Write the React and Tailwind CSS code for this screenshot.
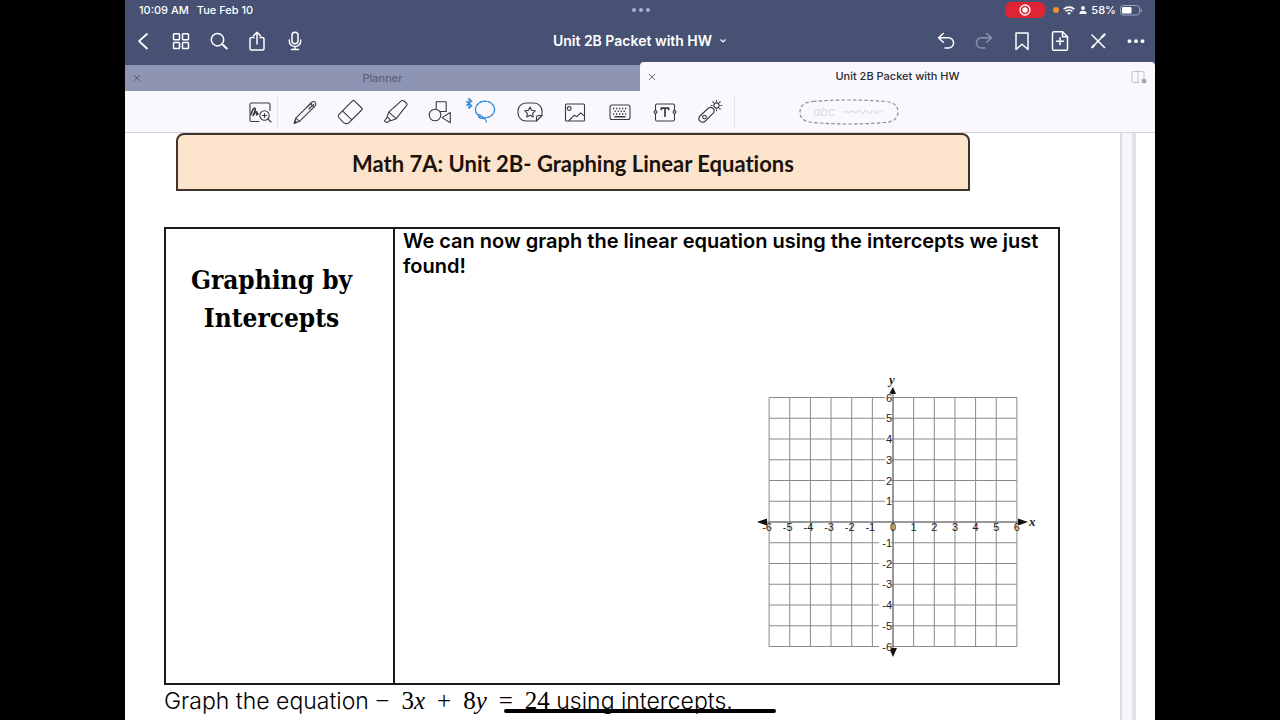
import React, { useState } from "react";

/* ----------------------------- Icon components ----------------------------- */
const NavIcon = ({ children, ...props }) => (
  <svg viewBox="0 0 24 24" fill="none" stroke="currentColor" strokeWidth="1.5" strokeLinecap="round" strokeLinejoin="round" className="h-6 w-6" {...props}>
    {children}
  </svg>
);

// tool icons are drawn around their own centre
const ToolIcon = ({ children, ...props }) => (
  <svg viewBox="-14 -14 28 28" fill="none" stroke="currentColor" strokeWidth="1.1" strokeLinecap="round" strokeLinejoin="round" className="h-7 w-7" {...props}>
    {children}
  </svg>
);

const IconClose = () => (
  <svg viewBox="0 0 8 8" fill="none" stroke="currentColor" strokeWidth="1" className="h-2 w-2">
    <path d="M1 1l6 6M7 1l-6 6" />
  </svg>
);

const leftActions = [
  { label: "Back", icon: <path d="M16 5l-8 7.2 8 7.3" strokeWidth="1.8" /> },
  {
    label: "Thumbnails",
    icon: (
      <>
        <rect x="4.5" y="4.7" width="6" height="6" rx=".8" />
        <rect x="13.5" y="4.7" width="6" height="6" rx=".8" />
        <rect x="4.5" y="13.5" width="6" height="6" rx=".8" />
        <rect x="13.5" y="13.5" width="6" height="6" rx=".8" />
      </>
    ),
  },
  {
    label: "Search",
    icon: (
      <>
        <circle cx="10.5" cy="10.7" r="6.2" />
        <path d="M15.2 15.2l4.6 4.3" strokeWidth="1.9" />
      </>
    ),
  },
  {
    label: "Share",
    icon: (
      <>
        <path d="M9 8.5H6.5A1.5 1.5 0 0 0 5 10v9.5A1.5 1.5 0 0 0 6.5 21h11a1.5 1.5 0 0 0 1.5-1.5V10a1.5 1.5 0 0 0-1.5-1.5H15" />
        <path d="M12 15V3.5M8.5 6.7L12 3.3l3.5 3.4" />
      </>
    ),
  },
  {
    label: "Record",
    icon: (
      <>
        <rect x="9" y="3.2" width="6" height="11.5" rx="3" />
        <path d="M6.3 11v1.2a5.7 5.3 0 0 0 11.4 0V11M12 17.5v2.7M8.5 20.4h7" />
      </>
    ),
  },
];

const rightActions = [
  { label: "Undo", icon: <path d="M9.3 4.5L4.5 8.8l4.8 4.4M4.8 8.8h9.7a5 5 0 0 1 0 10.2H11" /> },
  {
    label: "Redo",
    disabled: true,
    icon: <path d="M14.7 4.5l4.8 4.3-4.8 4.4M19.2 8.8H9.5a5 5 0 0 0 0 10.2H13" />,
  },
  { label: "Bookmark", icon: <path d="M6 4h12v16.5l-6-5.3-6 5.3z" /> },
  {
    label: "Add page",
    icon: (
      <>
        <path d="M14.5 2.7H6A1.5 1.5 0 0 0 4.5 4.2v15.5A1.5 1.5 0 0 0 6 21.2h12a1.5 1.5 0 0 0 1.5-1.5V7.7z" />
        <path d="M14.5 2.7v5h5M12 8.7v7M8.5 12.2h7" />
      </>
    ),
  },
  {
    label: "Close tools",
    icon: (
      <>
        <path d="M6 6l12.5 12.5" />
        <path d="M6 18.5L16 8" />
        <path d="M16 8l2.5-2.5M6.5 18l1.5-1.5" strokeWidth="2.3" />
      </>
    ),
  },
  {
    label: "More",
    icon: (
      <g fill="currentColor" stroke="none">
        <circle cx="5.5" cy="12.2" r="1.9" />
        <circle cx="12" cy="12.2" r="1.9" />
        <circle cx="18.5" cy="12.2" r="1.9" />
      </g>
    ),
  },
];

const tools = [
  {
    label: "Pen",
    icon: (
      <>
        <path d="M-10.8 11.2l1.6-5L5.5-8.3l3.4 3.5L-5.5 9.4z" />
        <path d="M5.5-8.3l1.8-1.8q1.5-1 2.8.3t.5 3l-1.7 2" />
        <path d="M-9.2 6.2l3.7 3.2M2.3-5.2l4.2-4.3M8.6-7.6L4-3" />
        <path d="M-10.8 11.2l.8-2.4 1.6 1.6z" fill="currentColor" />
      </>
    ),
  },
  {
    label: "Eraser",
    icon: (
      <>
        <path d="M2.5-11.2q1-1 2 0l7.2 7.2q1 1 0 2L-.8 10.3q-1.8 1.8-3.8 1.2-1.4-.4-2.6-1.6L-11.2 5.5q-1.3-1.5 0-2.9z" />
        <path d="M-7.5-1.2L1.8 7.8" />
      </>
    ),
  },
  {
    label: "Highlighter",
    icon: (
      <>
        <path d="M-6.3.2L6.3-11.2q1.2-1 2.3 0l3 2.4q1 1 .1 2.2L1.2 6.7z" />
        <path d="M-6.3.2l-1.5 4.5 3.6 4 5.4-2M-7.6 5.2l-3 3.8 2.7 1.6 3.2-2.3" />
      </>
    ),
  },
  {
    label: "Shapes",
    icon: (
      <>
        <path d="M-3.8-3.5v-6.7h10v9.7H.2" />
        <circle cx="-5" cy="3" r="5.8" />
        <path d="M10.3.5v10.2L2 5.6z" />
      </>
    ),
  },
  {
    label: "Lasso",
    active: true,
    icon: (
      <>
        <ellipse cx="0" cy="-2.5" rx="9.5" ry="8.3" strokeDasharray="3 1.5" strokeWidth="1.4" />
        <path d="M-7 3q1.5-1.2 3.5.8t.5 2.7q-1.6.4-3.6-1.7M-2.5 6.2q3.5.5 4 4" strokeDasharray="3 1" />
      </>
    ),
  },
  {
    label: "Stickers",
    icon: (
      <>
        <path d="M6.5 9H-4a8 8 0 0 1-8-8v-2a8 8 0 0 1 8-8h8a8 8 0 0 1 8 8v4.5z" />
        <path d="M6.5 9V5.5q0-2 2-2H12" />
        <path d="M0-5l1.6 3.3 3.6.5-2.6 2.5.6 3.6L0 3.2l-3.2 1.7.6-3.6-2.6-2.5 3.6-.5z" />
      </>
    ),
  },
  {
    label: "Image",
    icon: (
      <>
        <rect x="-9.5" y="-8" width="19" height="17" rx="1" />
        <circle cx="-5.8" cy="-3.5" r="1.9" />
        <path d="M-6 8.5l5.5-5.3 2.2 1.5 4-3.8 3.8 3.3" />
      </>
    ),
  },
  {
    label: "Keyboard",
    icon: (
      <>
        <rect x="-10" y="-7" width="20" height="14.5" rx="2" />
        <path d="M-7-3.5h14M-5.5-.7h12M-7 2h14" strokeWidth="1.6" strokeDasharray="1.3 1.7" strokeLinecap="butt" />
        <path d="M-5 4.7H5" strokeWidth="1.6" />
      </>
    ),
  },
  {
    label: "Text box",
    icon: (
      <>
        <path d="M-9.5-2v-4.5Q-9.5-8-8-8H8q1.5 0 1.5 1.5V-2M-9.5 2v5.5Q-9.5 9-8 9H8q1.5 0 1.5-1.5V2" />
        <circle cx="-9.5" cy="0" r="1.4" />
        <circle cx="9.5" cy="0" r="1.4" />
        <path d="M-3.7-2.5v-1.3h7.4v1.3M0-3.8v8" strokeWidth="1.7" />
      </>
    ),
  },
  {
    label: "Laser pointer",
    icon: (
      <>
        <path d="M-10.5 4.5L-1.5-4q2.5-1.5 4.5.3t.5 4.5l-8.7 8.7q-2.6 1.7-4.8-.3t-.5-4.7z" />
        <circle cx="-5.5" cy="5" r="1.8" />
        <circle cx="6.5" cy="-6.5" r="2.6" />
        <path d="M6.5-11.8v1M6.5-2.2v1M1.2-6.5h1M10.8-6.5h1M2.8-10.2l.7.7M9.5-3.5l.7.7M10.2-10.2l-.7.7" />
      </>
    ),
  },
];

/* ------------------------------- Status bar ------------------------------- */
function StatusBar() {
  return (
    <div className="grid h-5 grid-cols-[1fr_auto_1fr] items-center pl-3.5 pr-3 text-[11px] font-medium">
      <div className="flex gap-2">
        <span>10:09 AM</span>
        <span>Tue Feb 10</span>
      </div>
      <div className="flex gap-[3px]">
        <span className="h-1 w-1 rounded-full bg-[#a9b1d4]" />
        <span className="h-1 w-1 rounded-full bg-[#a9b1d4]" />
        <span className="h-1 w-1 rounded-full bg-[#a9b1d4]" />
      </div>
      <div className="flex items-center justify-end gap-1">
        <span className="mr-1 flex h-4 w-10 items-center justify-center rounded-md bg-[#df2533]">
          <svg viewBox="0 0 12 12" className="h-3 w-3" fill="none" stroke="white" strokeWidth="1.3">
            <circle cx="6" cy="6" r="5" />
            <circle cx="6" cy="6" r="2" fill="white" />
          </svg>
        </span>
        <span className="h-1.5 w-1.5 rounded-full bg-[#f0922b]" />
        <svg viewBox="0 0 12 9" className="h-[9px] w-3" fill="none" stroke="white" strokeWidth="1.6">
          <path d="M.6 3.3a7.7 7.7 0 0 1 10.8 0M2.6 5.4a4.8 4.8 0 0 1 6.8 0" />
          <path d="M6 9L4.2 7.1a2.5 2.5 0 0 1 3.6 0z" fill="white" stroke="none" />
        </svg>
        <svg viewBox="0 0 8 8" className="h-2 w-2" fill="white">
          <circle cx="4" cy="2" r="1.9" />
          <path d="M.4 8q0-3.3 3.6-3.3T7.6 8z" />
        </svg>
        <span>58%</span>
        <svg viewBox="0 0 23 11" className="h-[11px] w-[23px]" fill="none">
          <rect x=".5" y=".5" width="19" height="9.5" rx="2.8" stroke="#9ca3bd" />
          <rect x="2" y="2" width="9.5" height="6.5" rx="1.3" fill="white" />
          <path d="M21.2 3.7v3.2" stroke="#9ca3bd" strokeWidth="1.2" />
        </svg>
      </div>
    </div>
  );
}

function ActionButton({ label, icon, disabled }) {
  return (
    <button type="button" aria-label={label} disabled={disabled} className="h-6 w-6 disabled:text-[#8b93b3]">
      <NavIcon>{icon}</NavIcon>
    </button>
  );
}

function NavBar() {
  return (
    <nav className="grid h-[42px] grid-cols-[1fr_auto_1fr] items-center pl-1.5 pr-[7px]">
      <div className="flex gap-3.5">
        {leftActions.map((a) => (
          <ActionButton key={a.label} {...a} />
        ))}
      </div>
      <button type="button" className="flex items-center gap-2 text-sm font-semibold">
        Unit 2B Packet with HW
        <svg viewBox="0 0 6 4" className="h-1 w-1.5" fill="none" stroke="currentColor" strokeWidth="1.2">
          <path d="M.5.5L3 3 5.5.5" />
        </svg>
      </button>
      <div className="flex justify-end gap-3.5">
        {rightActions.map((a) => (
          <ActionButton key={a.label} {...a} />
        ))}
      </div>
    </nav>
  );
}

/* ---------------------------------- Tabs ---------------------------------- */
function Tabs() {
  return (
    <div className="flex h-[29px] items-end text-[11px]">
      <div className="flex h-[26px] flex-1 items-center bg-[#8e95b3] px-2 text-[#5a607c]">
        <button type="button" aria-label="Close Planner" className="flex w-5">
          <IconClose />
        </button>
        <button type="button" className="flex-1 text-center font-medium">
          Planner
        </button>
        <span className="w-5" />
      </div>
      <div className="flex h-full flex-1 items-center rounded-t bg-[#faf8fd] px-2 text-[#2b2b2f]">
        <button type="button" aria-label="Close Unit 2B Packet with HW" className="flex w-5 text-[#6f6f76]">
          <IconClose />
        </button>
        <button type="button" className="flex-1 text-center font-medium">
          Unit 2B Packet with HW
        </button>
        <button type="button" aria-label="Split view" className="flex w-5 justify-end text-[#c3c1c8]">
          <svg viewBox="0 0 16 14" className="h-3.5 w-4" fill="none" stroke="currentColor">
            <path d="M8.5 12.5h-6A1.5 1.5 0 0 1 1 11V3a1.5 1.5 0 0 1 1.5-1.5h9A1.5 1.5 0 0 1 13 3v5M7 1.5v11" />
            <circle cx="13" cy="11" r="2.5" fill="#a9a8ae" stroke="none" />
          </svg>
        </button>
      </div>
    </div>
  );
}

/* --------------------------------- Toolbar -------------------------------- */
function Toolbar() {
  const [tool, setTool] = useState("Lasso");

  return (
    <div className="flex h-[42px] items-center border-b border-[#d5d3da] bg-[#faf8fd] pl-[118px] text-[#3a3a3e]">
      <button type="button" aria-label="Zoom window" className="flex w-[34px] justify-center">
        <ToolIcon>
          <path d="M10-1.5v-6Q10-9 8.5-9h-17Q-10-9-10-7.5v15.5q0 1.5 1.5 1.5H-1" />
          <path d="M-9 2.5q2.2-7 3.8-6.3T-7 3.5q1.6-3 3-3.5t.7 1.8 1.3 0" strokeWidth="1.6" />
          <circle cx="4.5" cy="3.5" r="4.7" />
          <path d="M8 7l3 3M4.5 1.5v4M2.5 3.5h4" />
        </ToolIcon>
      </button>
      <span className="h-8 w-px bg-[#e4e2e8]" />
      <div className="ml-1 flex">
        {tools.map((t) => (
          <button
            key={t.label}
            type="button"
            aria-label={t.label}
            aria-pressed={tool === t.label}
            onClick={() => setTool(t.label)}
            className="relative flex w-[45px] justify-center aria-pressed:text-[#2f86d6]"
          >
            <ToolIcon>{t.icon}</ToolIcon>
            {t.active && (
              <svg viewBox="0 0 8 12" className="absolute left-[3px] top-0 h-[11px] w-2" fill="none" stroke="#2f86d6" strokeWidth="1.4">
                <path d="M1 3.5l6 5-3 2.7V.8l3 2.7-6 5" />
              </svg>
            )}
          </button>
        ))}
      </div>
      <span className="ml-0.5 h-8 w-px bg-[#e4e2e8]" />
      <button type="button" aria-label="Lasso selection" className="relative ml-16 flex h-[26px] w-[100px] items-center justify-center gap-2 text-[#dddce0]">
        <svg viewBox="0 0 100 26" className="absolute inset-0 h-full w-full" fill="none" stroke="#8d8c92" strokeWidth="1.2">
          <path d="M14 2.5Q50-.5 86 2.5 99 3.5 99 13T86 23.5Q50 26.5 14 23.5 1 22.5 1 13T14 2.5z" strokeDasharray="3.5 2.2" />
        </svg>
        <span className="text-xs italic">abc</span>
        <svg viewBox="0 0 42 4" className="h-1 w-[42px]" fill="none" stroke="currentColor" strokeWidth="1.2">
          <path d="M0 2.5q2-1.5 4-.5t3.5-.5 3.5.5 3.5-.5 3.5.5 3.5-.5 3.5.5 3.5-.5 3.5.5 3.5-.5 3.500.5" />
        </svg>
      </button>
    </div>
  );
}

/* ----------------------------- Coordinate plane ---------------------------- */
const TICKS = [-6, -5, -4, -3, -2, -1, 0, 1, 2, 3, 4, 5, 6];
const px = (n) => 143 + n * 20.65;
const py = (n) => 153 - n * 20.75;

function CoordinatePlane() {
  return (
    <svg viewBox="0 0 300 300" className="h-[300px] w-[300px] font-['Liberation_Sans',sans-serif] font-normal" role="img" aria-label="Coordinate plane">
      <g stroke="#8a8a8a" strokeWidth="1">
        {TICKS.map((n) => (
          <React.Fragment key={n}>
            <path d={`M${px(n)} ${py(6)}V${py(-6)}`} />
            <path d={`M${px(-6)} ${py(n)}H${px(6)}`} />
          </React.Fragment>
        ))}
      </g>
      <path d="M8 153H276M143 20V284" stroke="#6a6a6a" strokeWidth="1" />
      <g fill="#111">
        <path d="M7 153l10-3.5v7zM278 153l-10-3.5v7zM143 18l-4 7h7zM143 288l-4-9h8z" />
      </g>
      <g fill="#222" fontSize="11">
        {TICKS.filter((n) => n !== 0).map((n) => (
          <React.Fragment key={n}>
            <rect x={n < 0 ? 129 : 135} y={py(n) - 4} width={n < 0 ? 12 : 6} height="8" fill="white" />
            <text x="142" y={py(n) + 4} textAnchor="end">{n}</text>
          </React.Fragment>
        ))}
        {TICKS.map((n) => (
          <text key={n} x={n < 0 ? px(n) - 2 : px(n)} y="162" textAnchor="middle">{n}</text>
        ))}
      </g>
      <g fill="#222" fontSize="13" fontStyle="italic" fontWeight="bold" className="font-['Liberation_Serif',serif]">
        <text x="139" y="15">y</text>
        <text x="279" y="157">x</text>
      </g>
    </svg>
  );
}

/* -------------------------------- Worksheet ------------------------------- */
function Worksheet() {
  return (
    <main className="flex min-h-0 flex-1 overflow-hidden bg-white text-black">
      <article className="flex-1 pl-[39px] pr-[60px]">
        <h1 className="ml-3 mr-[90px] flex h-[58px] items-center justify-center rounded-t-lg border-2 border-[#40332c] bg-[#fce3cc] pt-0.5 font-[Lato,sans-serif] text-[22px] font-bold text-[#1c120d] [font-variant-ligatures:none]">
          Math 7A: Unit 2B- Graphing Linear Equations
        </h1>
        <table className="mt-9 w-full border-collapse">
          <tbody>
            <tr className="align-top">
              <th scope="row" className="w-[229px] border-2 border-[#1a1a1a] pr-4 pt-8 font-['DejaVu_Serif_Condensed','DejaVu_Serif',serif] text-[26px] font-bold leading-[38px]">
                Graphing by
                <br />
                Intercepts
              </th>
              <td className="border-2 border-[#1a1a1a] pb-3.5 pl-2 pr-2 font-[Inter,sans-serif] text-xl font-semibold leading-[25px]">
                <p>We can now graph the linear equation using the intercepts we just found!</p>
                <div className="mt-[90px] flex justify-end">
                  <CoordinatePlane />
                </div>
              </td>
            </tr>
          </tbody>
        </table>
        <p className="font-[Inter,sans-serif] text-[23px] font-light leading-8">
          Graph the equation{" "}
          <span className="inline-flex gap-3 font-['Liberation_Serif',serif] text-[25px] font-normal">
            <span>−</span>
            <span>3<i>x</i></span>
            <span>+</span>
            <span>8<i>y</i></span>
            <span>=</span>
            <span>24</span>
          </span>{" "}
          using intercepts.
        </p>
      </article>
      <div className="w-4 border-l-2 border-r-4 border-l-[#dcdbdf] border-r-[#e2e1e5] bg-[#f6f5f8]" />
      <div className="w-[19px]" />
    </main>
  );
}

export default function App() {
  return (
    <div className="h-screen overflow-hidden bg-black px-[125px] font-[Inter,sans-serif]">
      <div className="relative flex h-full flex-col">
        <header className="bg-[#475173] text-white">
          <StatusBar />
          <NavBar />
          <Tabs />
          <Toolbar />
        </header>
        <Worksheet />
        <div className="absolute bottom-[7px] left-1/2 h-1 w-[272px] -translate-x-1/2 rounded-full bg-black" />
      </div>
    </div>
  );
}
